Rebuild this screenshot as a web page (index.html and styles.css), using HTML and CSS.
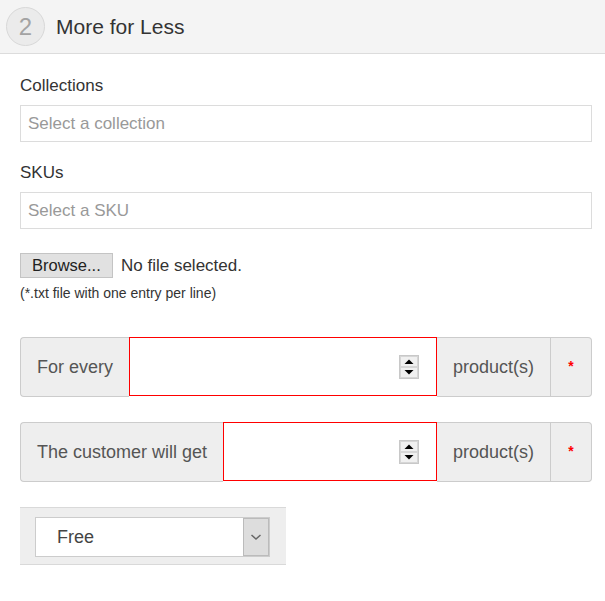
FILE: index.html
```html
<!DOCTYPE html>
<html>
<head>
<meta charset="utf-8">
<link rel="stylesheet" href="styles.css">
</head>
<body>
<div class="header">
  <div class="step">2</div>
  <div class="title">More for Less</div>
</div>
<div class="content">
  <div class="label">Collections</div>
  <div class="textbox">Select a collection</div>
  <div class="label second">SKUs</div>
  <div class="textbox">Select a SKU</div>
  <div class="file-row">
    <span class="browse">Browse...</span>
    <span class="nofile">No file selected.</span>
  </div>
  <div class="hint">(*.txt file with one entry per line)</div>

  <div class="group first-group">
    <div class="addon left">For every</div>
    <div class="num">
      <svg class="spin" width="20" height="24" viewBox="0 0 20 24">
        <rect x="0.5" y="0.5" width="19" height="23" fill="#e6e6e6" stroke="#c8c8c8"/>
        <rect x="1.5" y="1.5" width="17" height="10" fill="#f0f0f0" stroke="#d6d6d6"/>
        <rect x="1.5" y="12.5" width="17" height="10" fill="#f0f0f0" stroke="#d6d6d6"/>
        <path d="M5.5 9 L10 4.5 L14.5 9 Z" fill="#000"/>
        <path d="M5.5 15 L14.5 15 L10 19.5 Z" fill="#000"/>
      </svg>
    </div>
    <div class="addon mid">product(s)</div>
    <div class="addon right"><span class="req">*</span></div>
  </div>

  <div class="group">
    <div class="addon left">The customer will get</div>
    <div class="num">
      <svg class="spin" width="20" height="24" viewBox="0 0 20 24">
        <rect x="0.5" y="0.5" width="19" height="23" fill="#e6e6e6" stroke="#c8c8c8"/>
        <rect x="1.5" y="1.5" width="17" height="10" fill="#f0f0f0" stroke="#d6d6d6"/>
        <rect x="1.5" y="12.5" width="17" height="10" fill="#f0f0f0" stroke="#d6d6d6"/>
        <path d="M5.5 9 L10 4.5 L14.5 9 Z" fill="#000"/>
        <path d="M5.5 15 L14.5 15 L10 19.5 Z" fill="#000"/>
      </svg>
    </div>
    <div class="addon mid">product(s)</div>
    <div class="addon right"><span class="req">*</span></div>
  </div>

  <div class="select-wrap">
    <div class="select">
      <span class="select-text">Free</span>
      <span class="select-btn">
        <svg width="12" height="8" viewBox="0 0 12 8"><polyline points="1.5,2 6,6 10.5,2" fill="none" stroke="#666" stroke-width="1.5"/></svg>
      </span>
    </div>
  </div>
</div>
</body>
</html>
```
FILE: styles.css
```css
* { box-sizing: border-box; }
body {
  margin: 0;
  font-family: "Liberation Sans", Arial, sans-serif;
  color: #333;
  background: #fff;
}
.header {
  height: 54px;
  background: #f4f4f4;
  border-bottom: 1px solid #dcdcdc;
  display: flex;
  align-items: center;
  padding-left: 6px;
  gap: 11px;
}
.step {
  width: 39px;
  height: 39px;
  border-radius: 50%;
  border: 1px solid #d8d8d8;
  background: #ebebeb;
  color: #a3a3a3;
  font-size: 24px;
  display: flex;
  align-items: center;
  justify-content: center;
}
.title {
  font-size: 21px;
  color: #333;
}
.content {
  padding: 22px 13px 0 20px;
}
.label {
  font-size: 17px;
  line-height: 20px;
  color: #333;
  margin-bottom: 9px;
}
.label.second { margin-top: 21px; }
.textbox {
  height: 37px;
  border: 1px solid #dcdcdc;
  padding-left: 7px;
  font-size: 17px;
  color: #999;
  display: flex;
  align-items: center;
}
.file-row {
  margin-top: 24px;
  display: flex;
  align-items: center;
  gap: 8px;
}
.browse {
  width: 93px;
  height: 25px;
  background: #e1e1e1;
  border: 1px solid #c4c4c4;
  font-size: 16.5px;
  color: #222;
  display: flex;
  align-items: center;
  padding-left: 11px;
}
.nofile {
  font-size: 17px;
  color: #333;
}
.hint {
  font-size: 14px;
  color: #333;
  margin-top: 7px;
  line-height: 16px;
}
.group {
  display: flex;
  height: 60px;
  margin-top: 25px;
}
.group.first-group { margin-top: 36px; }
.addon {
  background: #eeeeee;
  border-top: 1px solid #cccccc;
  border-bottom: 1px solid #cccccc;
  color: #555;
  font-size: 18px;
  display: flex;
  align-items: center;
  padding: 0 16px;
}
.addon.left {
  border-left: 1px solid #cccccc;
  border-radius: 4px 0 0 4px;
}
.addon.mid {
  border-right: 1px solid #cccccc;
}
.addon.right {
  border-right: 1px solid #cccccc;
  border-radius: 0 4px 4px 0;
  width: 41px;
  justify-content: center;
  padding: 0;
}
.req {
  color: #ff0000;
  font-size: 14px;
  font-weight: bold;
  margin-top: -3px;
}
.num {
  flex: 1;
  border: 1px solid #ff0000;
  background: #fff;
  display: flex;
  align-items: center;
  justify-content: flex-end;
  padding-right: 17px;
  height: 59px;
}
.spin { display: block; }
.select-wrap {
  margin-top: 25px;
  width: 266px;
  height: 58px;
  background: #eeeeee;
  border-top: 1px solid #d9d9d9;
  border-bottom: 1px solid #d9d9d9;
  padding: 9px 0 0 15px;
}
.select {
  width: 235px;
  height: 40px;
  border: 1px solid #cccccc;
  background: #fff;
  display: flex;
  align-items: stretch;
}
.select-text {
  flex: 1;
  font-size: 18px;
  color: #444;
  padding-left: 21px;
  display: flex;
  align-items: center;
}
.select-btn {
  width: 26px;
  background: #dddddd;
  border: 1px solid #bbbbbb;
  display: flex;
  align-items: center;
  justify-content: center;
}
```
